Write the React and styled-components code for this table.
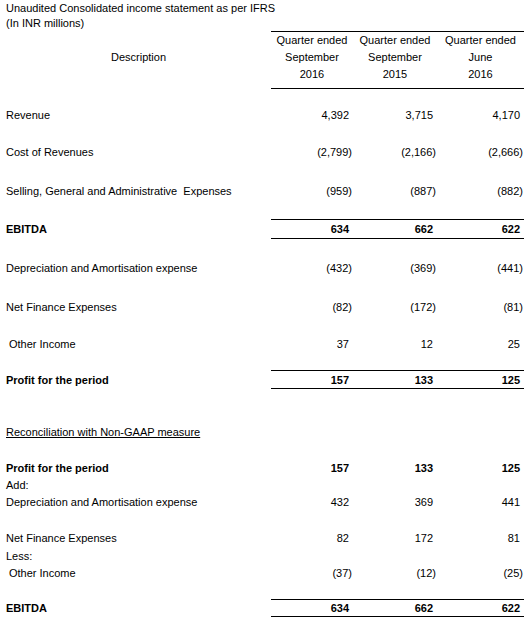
import React from "react";
import styled, { createGlobalStyle } from "styled-components";

const GlobalStyle = createGlobalStyle`
  html, body {
    margin: 0;
    padding: 0;
    background: #fff;
  }
  body {
    font-family: "Liberation Sans", Arial, sans-serif;
    font-size: 11px;
    color: #000;
  }
`;

const rows = [
   { h: 18 },
   { label: "Revenue", vals: ["4,392", "3,715", "4,170"], h: 16 },
   { h: 21 },
   { label: "Cost of Revenues", vals: ["(2,799)", "(2,166)", "(2,666)"], h: 16 },
   { h: 23 },
   { label: "Selling, General and Administrative  Expenses", vals: ["(959)", "(887)", "(882)"], h: 16 },
   { h: 20 },
   { label: "EBITDA", vals: ["634", "662", "622"], h: 20, bold: true, rule: true },
   { h: 21 },
   { label: "Depreciation and Amortisation expense", vals: ["(432)", "(369)", "(441)"], h: 16 },
   { h: 23 },
   { label: "Net Finance Expenses", vals: ["(82)", "(172)", "(81)"], h: 16 },
   { h: 21 },
   { label: "Other Income", vals: ["37", "12", "25"], h: 16, indent: true },
   { h: 18 },
   { label: "Profit for the period", vals: ["157", "133", "125"], h: 19, bold: true, rule: true },
   { h: 35 },
   { label: "Reconciliation with Non-GAAP measure", h: 16, underline: true },
   { h: 19 },
   { label: "Profit for the period", vals: ["157", "133", "125"], h: 17, bold: true },
   { label: "Add:", h: 18 },
   { label: "Depreciation and Amortisation expense", vals: ["432", "369", "441"], h: 16 },
   { h: 19 },
   { label: "Net Finance Expenses", vals: ["82", "172", "81"], h: 17 },
   { label: "Less:", h: 19 },
   { label: "Other Income", vals: ["(37)", "(12)", "(25)"], h: 16, indent: true },
   { h: 18 },
   { label: "EBITDA", vals: ["634", "662", "622"], h: 18, bold: true, rule: true },
];

const periods = [
   ["Quarter ended", "September", "2016"],
   ["Quarter ended", "September", "2015"],
   ["Quarter ended", "June", "2016"],
];

const App = () => {
   return (
      <>
         <GlobalStyle />
         <Sheet>
            <Title $h={16}>Unaudited Consolidated income statement as per IFRS</Title>
            <Title $h={15}>(In INR millions)</Title>

            <HeaderRow>
               <HeadLabel>Description</HeadLabel>
               <Figures $top $bottom>
                  {periods.map((p, i) => (
                     <HeadCell key={i}>
                        {p.map((line) => (
                           <span key={line}>{line}</span>
                        ))}
                     </HeadCell>
                  ))}
               </Figures>
            </HeaderRow>

            {rows.map((r, i) => (
               <Row key={i} $h={r.h}>
                  <Label $bold={r.bold} $indent={r.indent} $underline={r.underline}>
                     {r.label}
                  </Label>
                  <Figures $top={r.rule} $bottom={r.rule}>
                     {(r.vals || ["", "", ""]).map((v, j) => (
                        <Num key={j} $bold={r.bold} $neg={v.startsWith("(")}>
                           {v}
                        </Num>
                     ))}
                  </Figures>
               </Row>
            ))}
         </Sheet>
      </>
   );
};

const Sheet = styled.div`
   width: 524px;
   padding-left: 6px;
   box-sizing: border-box;
   display: flex;
   flex-direction: column;
`;

const Title = styled.div`
   height: ${(p) => p.$h}px;
   line-height: ${(p) => p.$h}px;
   font-weight: ${(p) => (p.$bold ? 700 : 400)};
   white-space: nowrap;
`;

const HeaderRow = styled.div`
   display: grid;
   grid-template-columns: 265px 1fr;
   height: 58px;
`;

const HeadLabel = styled.div`
   padding-top: 18px;
   line-height: 17px;
   text-align: center;
`;

const Figures = styled.div`
   display: grid;
   grid-template-columns: 82px 84px 87px;
   box-sizing: border-box;
   border-top: ${(p) => (p.$top ? "1px solid #000" : "0")};
   border-bottom: ${(p) => (p.$bottom ? "1px solid #000" : "0")};
   align-items: center;
`;

const HeadCell = styled.div`
   display: flex;
   flex-direction: column;
   align-items: center;
   align-self: start;
   line-height: 17px;
`;

const Row = styled.div`
   display: grid;
   grid-template-columns: 265px 1fr;
   height: ${(p) => p.$h}px;
`;

const Label = styled.div`
   display: flex;
   align-items: center;
   white-space: pre;
   padding-left: ${(p) => (p.$indent ? "3px" : "0")};
   font-weight: ${(p) => (p.$bold ? 700 : 400)};
   text-decoration: ${(p) => (p.$underline ? "underline" : "none")};
`;

const Num = styled.div`
   text-align: right;
   padding-right: ${(p) => (p.$neg ? "1px" : "4px")};
   font-weight: ${(p) => (p.$bold ? 700 : 400)};
`;

export default App;
